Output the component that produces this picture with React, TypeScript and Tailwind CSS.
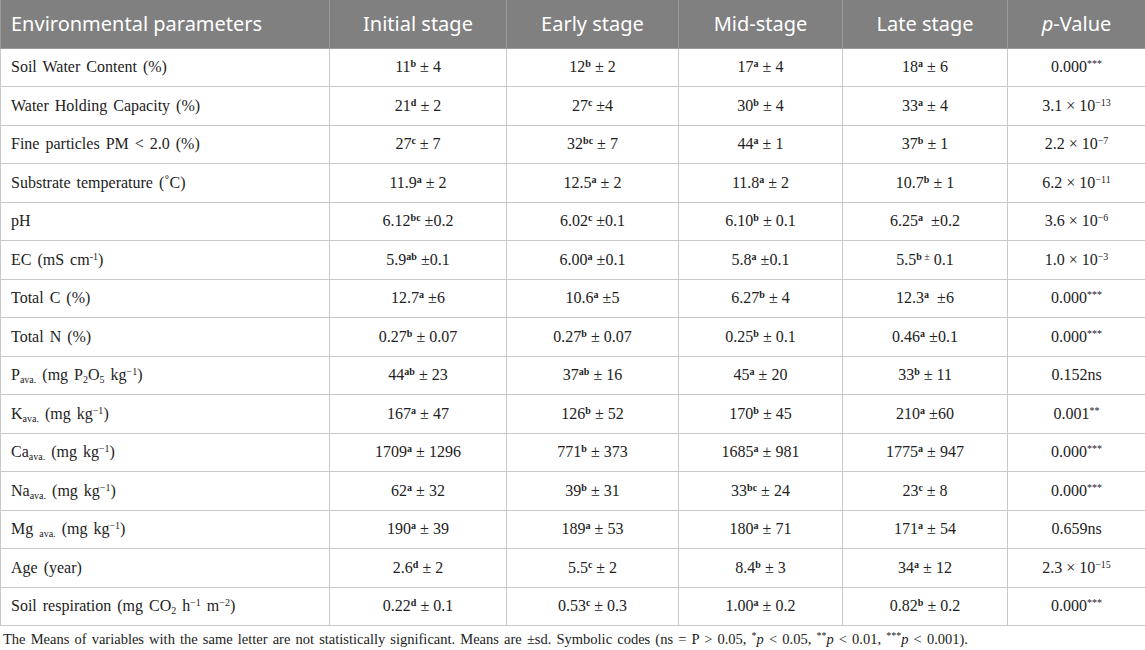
import React from "react";

type Cell = React.ReactNode;

const S = ({ children }: { children: React.ReactNode }) => (
  <sup className="text-[10px] font-bold relative top-[-0.5em]">{children}</sup>
);
const Sp = ({ children }: { children: React.ReactNode }) => (
  <sup className="text-[10px] relative top-[-0.5em]">{children}</sup>
);
const Sb = ({ children }: { children: React.ReactNode }) => (
  <sub className="text-[10px] relative bottom-[-0.3em]">{children}</sub>
);

const v = (n: string, s: string, r: string): Cell => (
  <span>
    {n}
    <S>{s}</S> {r}
  </span>
);
const pe = (m: string, e: string): Cell => (
  <span>
    {m} × 10<Sp>{e}</Sp>
  </span>
);
const stars = (n: string, s: string): Cell => (
  <span>
    {n}
    <Sp>{s}</Sp>
  </span>
);
const kg = (
  <>
    kg<Sp>−1</Sp>
  </>
);

const rows: Cell[][] = [
  ["Soil Water Content (%)", v("11", "b", "± 4"), v("12", "b", "± 2"), v("17", "a", "± 4"), v("18", "a", "± 6"), stars("0.000", "***")],
  ["Water Holding Capacity (%)", v("21", "d", "± 2"), v("27", "c", "±4"), v("30", "b", "± 4"), v("33", "a", "± 4"), pe("3.1", "−13")],
  ["Fine particles PM < 2.0 (%)", v("27", "c", "± 7"), v("32", "bc", "± 7"), v("44", "a", "± 1"), v("37", "b", "± 1"), pe("2.2", "−7")],
  ["Substrate temperature (˚C)", v("11.9", "a", "± 2"), v("12.5", "a", "± 2"), v("11.8", "a", "± 2"), v("10.7", "b", "± 1"), pe("6.2", "−11")],
  ["pH", v("6.12", "bc", "±0.2"), v("6.02", "c", "±0.1"), v("6.10", "b", "± 0.1"), v("6.25", "a", "\u00a0±0.2"), pe("3.6", "−6")],
  [
    <span>
      EC (mS cm<Sp>-1</Sp>)
    </span>,
    v("5.9", "ab", "±0.1"),
    v("6.00", "a", "±0.1"),
    v("5.8", "a", "±0.1"),
    <span>
      5.5<S>b</S>
      <Sp> ±</Sp> 0.1
    </span>,
    pe("1.0", "−3"),
  ],
  ["Total C (%)", v("12.7", "a", "±6"), v("10.6", "a", "±5"), v("6.27", "b", "± 4"), v("12.3", "a", "\u00a0±6"), stars("0.000", "***")],
  ["Total N (%)", v("0.27", "b", "± 0.07"), v("0.27", "b", "± 0.07"), v("0.25", "b", "± 0.1"), v("0.46", "a", "±0.1"), stars("0.000", "***")],
  [
    <span>
      P<Sb>ava.</Sb> (mg P<Sb>2</Sb>O<Sb>5</Sb> {kg})
    </span>,
    v("44", "ab", "± 23"),
    v("37", "ab", "± 16"),
    v("45", "a", "± 20"),
    v("33", "b", "± 11"),
    "0.152ns",
  ],
  [
    <span>
      K<Sb>ava.</Sb> (mg {kg})
    </span>,
    v("167", "a", "± 47"),
    v("126", "b", "± 52"),
    v("170", "b", "± 45"),
    v("210", "a", "±60"),
    stars("0.001", "**"),
  ],
  [
    <span>
      Ca<Sb>ava.</Sb> (mg {kg})
    </span>,
    v("1709", "a", "± 1296"),
    v("771", "b", "± 373"),
    v("1685", "a", "± 981"),
    v("1775", "a", "± 947"),
    stars("0.000", "***"),
  ],
  [
    <span>
      Na<Sb>ava.</Sb> (mg {kg})
    </span>,
    v("62", "a", "± 32"),
    v("39", "b", "± 31"),
    v("33", "bc", "± 24"),
    v("23", "c", "± 8"),
    stars("0.000", "***"),
  ],
  [
    <span>
      Mg <Sb>ava.</Sb> (mg {kg})
    </span>,
    v("190", "a", "± 39"),
    v("189", "a", "± 53"),
    v("180", "a", "± 71"),
    v("171", "a", "± 54"),
    "0.659ns",
  ],
  ["Age (year)", v("2.6", "d", "± 2"), v("5.5", "c", "± 2"), v("8.4", "b", "± 3"), v("34", "a", "± 12"), pe("2.3", "−15")],
  [
    <span>
      Soil respiration (mg CO<Sb>2</Sb> h<Sp>−1</Sp> m<Sp>−2</Sp>)
    </span>,
    v("0.22", "d", "± 0.1"),
    v("0.53", "c", "± 0.3"),
    v("1.00", "a", "± 0.2"),
    v("0.82", "b", "± 0.2"),
    stars("0.000", "***"),
  ],
];

const widths = ["w-[329px]", "w-[177px]", "w-[172px]", "w-[164px]", "w-[165px]", "w-[138px]"];

export default function App() {
  return (
    <div className="w-[1145px] h-[650px] bg-white overflow-hidden">
      <table className="w-[1145px] table-fixed border-collapse">
        <colgroup>
          {widths.map((w, i) => (
            <col key={i} className={w} />
          ))}
        </colgroup>
        <thead>
          <tr className="h-[48px] bg-[#808080] text-white text-[20px] font-['Noto_Sans',sans-serif]">
            <th className="text-left font-normal pl-[10px] border border-[#9a9a9a] border-t-0">Environmental parameters</th>
            <th className="font-normal border border-[#9a9a9a] border-t-0">Initial stage</th>
            <th className="font-normal border border-[#9a9a9a] border-t-0">Early stage</th>
            <th className="font-normal border border-[#9a9a9a] border-t-0">Mid-stage</th>
            <th className="font-normal border border-[#9a9a9a] border-t-0">Late stage</th>
            <th className="font-normal border border-[#9a9a9a] border-t-0">
              <i>p</i>-Value
            </th>
          </tr>
        </thead>
        <tbody className="font-['Liberation_Serif',serif] text-[16px] text-[#222]">
          {rows.map((r, i) => (
            <tr key={i} className="h-[38.5px]">
              {r.map((c, j) => (
                <td
                  key={j}
                  className={
                    "border border-[#c8c8c8] leading-none " +
                    (j === 0 ? "text-left pl-[10px] [word-spacing:2px]" : "text-center")
                  }
                >
                  {c}
                </td>
              ))}
            </tr>
          ))}
        </tbody>
      </table>
      <p className="font-['Liberation_Serif',serif] text-[14.5px] text-[#222] pl-[3px] pt-[3px] [word-spacing:1.5px]">
        The Means of variables with the same letter are not statistically significant. Means are ±sd. Symbolic codes (ns = P &gt; 0.05, <Sp>*</Sp>
        <i>p</i> &lt; 0.05, <Sp>**</Sp>
        <i>p</i> &lt; 0.01, <Sp>***</Sp>
        <i>p</i> &lt; 0.001).
      </p>
    </div>
  );
}
